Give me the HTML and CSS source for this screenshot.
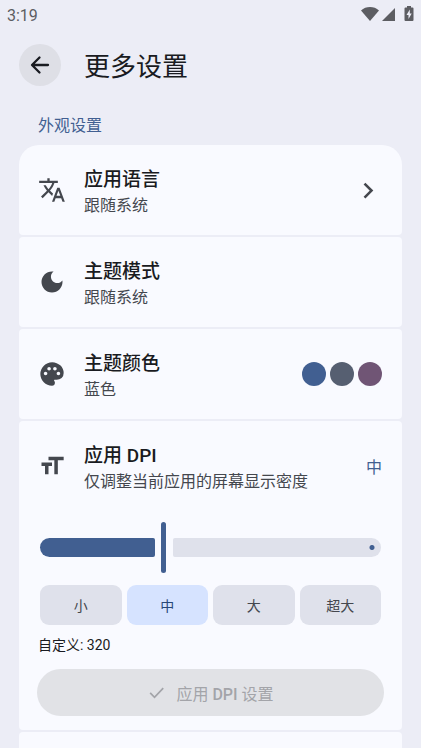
FILE: index.html
```html
<!DOCTYPE html>
<html lang="zh-CN">
<head>
  <meta charset="utf-8">
  <meta name="viewport" content="width=device-width, initial-scale=1">
  <title>更多设置</title>
  <link rel="stylesheet" href="styles.css">
</head>
<body>
  <div class="status-bar">
    <span class="clock">3:19</span>
    <svg class="status-icons" viewBox="0 0 54 18" aria-hidden="true">
      <path d="M1 4.500C6 -.1 14 -.1 19 4.500L10 15z"/>
      <path d="M35 2v13H22z"/>
      <path fill-rule="evenodd" d="M47 0h4v1.500h1.500q1 0 1 1V14q0 1-1 1h-7q-1 0-1-1V2.500q0-1 1-1H47zM49.800 3.500L46.500 9h2v4l3.200-5.500h-1.900z"/>
    </svg>
  </div>

  <header class="top-bar">
    <button class="back" type="button" aria-label="返回">
      <svg viewBox="0 0 24 24" aria-hidden="true"><path d="M20 12H4.500M11.500 4.500L4 12l7.500 7.500"/></svg>
    </button>
    <h1>更多设置</h1>
  </header>

  <main class="content">
    <h2 class="section-title">外观设置</h2>

    <button class="card row" type="button">
      <svg class="icon" viewBox="0 0 24 24" aria-hidden="true"><path d="M12.870 15.070l-2.540-2.510.03-.03c1.740-1.940 2.980-4.170 3.710-6.530H17V4h-7V2H8v2H1v1.990h11.170C11.500 7.920 10.440 9.750 9 11.350 8.070 10.320 7.300 9.190 6.690 8h-2c.73 1.630 1.730 3.170 2.980 4.560l-5.090 5.020L4 19l5-5 3.110 3.110.76-2.040zM18.500 10h-2L12 22h2l1.120-3h4.750L21 22h2l-4.500-12zm-2.620 7l1.620-4.330L19.120 17h-3.240z"/></svg>
      <span class="label"><span class="name">应用语言</span><span class="detail">跟随系统</span></span>
      <svg class="chevron" viewBox="0 0 24 24" aria-hidden="true"><path d="M9 6.500l6 6-6 6"/></svg>
    </button>

    <button class="card row" type="button">
      <svg class="icon" viewBox="0 0 24 24" aria-hidden="true"><path d="M12 3c-4.970 0-9 4.030-9 9s4.030 9 9 9 9-4.030 9-9c0-.46-.04-.92-.1-1.360-.98 1.370-2.580 2.260-4.400 2.260-2.980 0-5.400-2.420-5.400-5.400 0-1.810.89-3.420 2.260-4.400-.44-.06-.9-.1-1.360-.1z"/></svg>
      <span class="label"><span class="name">主题模式</span><span class="detail">跟随系统</span></span>
    </button>

    <button class="card row" type="button">
      <svg class="icon" viewBox="0 -960 960 960" aria-hidden="true"><path d="M480-80q-82 0-155-31.500t-127.500-86Q143-252 111.500-325T80-480q0-83 32.500-156t88-127Q256-817 330-848.500T488-880q80 0 151 27.500t124.500 76q53.500 48.500 85 115T880-518q0 115-70 176.500T640-280h-74q-9 0-12.500 5t-3.500 11q0 12 15 34.500t15 51.500q0 50-27.500 74T480-80ZM260-440q26 0 43-17t17-43q0-26-17-43t-43-17q-26 0-43 17t-17 43q0 26 17 43t43 17Zm120-160q26 0 43-17t17-43q0-26-17-43t-43-17q-26 0-43 17t-17 43q0 26 17 43t43 17Zm200 0q26 0 43-17t17-43q0-26-17-43t-43-17q-26 0-43 17t-17 43q0 26 17 43t43 17Zm120 160q26 0 43-17t17-43q0-26-17-43t-43-17q-26 0-43 17t-17 43q0 26 17 43t43 17Z"/></svg>
      <span class="label"><span class="name">主题颜色</span><span class="detail">蓝色</span></span>
      <span class="swatches">
        <span class="swatch primary"></span>
        <span class="swatch secondary"></span>
        <span class="swatch tertiary"></span>
      </span>
    </button>

    <section class="card dpi">
      <div class="row">
        <svg class="icon" viewBox="0 0 24 24" aria-hidden="true"><path d="M9 4v3h5v12h3V7h5V4H9zm-6 8h3v7h3v-7h3V9H3v3z"/></svg>
        <label class="label" for="dpi"><span class="name">应用 DPI</span><span class="detail">仅调整当前应用的屏幕显示密度</span></label>
        <output class="value" for="dpi">中</output>
      </div>
      <div class="slider" style="--position: 36%">
        <span class="track-active"></span>
        <span class="track-rest"></span>
        <input id="dpi" type="range" min="140" max="640" value="320">
      </div>
      <div class="presets">
        <button type="button">小</button>
        <button type="button" class="selected" aria-pressed="true">中</button>
        <button type="button">大</button>
        <button type="button">超大</button>
      </div>
      <p class="custom">自定义: 320</p>
      <button class="apply" type="button" disabled>
        <svg viewBox="0 0 24 24" aria-hidden="true"><path d="M4 12.500l5.500 5.500L20.500 6.500"/></svg>
        <span>应用 <b>DPI</b> 设置</span>
      </button>
    </section>

    <section class="card next"></section>
  </main>
</body>
</html>
```

FILE: styles.css
```css
:root {
  --page: #ecedf6;
  --surface: #f9faff;
  --ink: #191b21;
  --ink-soft: #44474e;
  --primary: #415f91;
  --container: #dfe1eb;
}

* {
  box-sizing: border-box;
}

body {
  margin: 0;
  min-height: 100vh;
  display: flex;
  flex-direction: column;
  background: var(--page);
  color: var(--ink);
  font-family: Roboto, "Noto Sans CJK SC", sans-serif;
  font-size: 16px;
}

button {
  border: 0;
  padding: 0;
  font: inherit;
  color: inherit;
}

h1, h2, p {
  margin: 0;
  font-weight: 400;
}

.status-bar {
  display: flex;
  align-items: center;
  justify-content: space-between;
  height: 30px;
  padding: 0 7px;
  color: #5c5d62;
}

.status-icons {
  width: 54px;
  height: 18px;
  fill: #5c5d62;
}

.top-bar {
  display: flex;
  align-items: center;
  gap: 23px;
  padding: 14px 19px;
}

.back {
  display: grid;
  place-items: center;
  width: 42px;
  height: 42px;
  border-radius: 50%;
  background: #dedfe6;
}

.back svg {
  width: 24px;
  height: 24px;
  fill: none;
  stroke: var(--ink);
  stroke-width: 2.300;
  stroke-linecap: round;
  stroke-linejoin: round;
}

h1 {
  padding-top: 4px;
  font-size: 26px;
  line-height: 38px;
}

.content {
  flex: 1;
  display: flex;
  flex-direction: column;
  gap: 2px;
  padding: 0 19px;
}

.section-title {
  padding: 14px 19px 5px;
  font-size: 16px;
  line-height: 24px;
  color: var(--primary);
}

.card {
  border-radius: 4px;
  background: var(--surface);
}

.section-title + .card {
  border-radius: 20px 20px 4px 4px;
}

.row {
  display: flex;
  align-items: center;
  gap: 18px;
  width: 100%;
  height: 90px;
  padding: 0 20px 0 19px;
  text-align: left;
}

.icon {
  flex: none;
  width: 28px;
  height: 28px;
  fill: var(--ink-soft);
}

.label {
  flex: 1;
  display: flex;
  flex-direction: column;
  padding-top: 6px;
  line-height: 26px;
}

.name {
  font-size: 19px;
  font-weight: 500;
}

.detail {
  color: var(--ink-soft);
}

.chevron {
  width: 28px;
  height: 28px;
  fill: none;
  stroke: var(--ink-soft);
  stroke-width: 2.200;
}

.swatches {
  display: flex;
  gap: 4px;
}

.swatch {
  width: 24px;
  height: 24px;
  border-radius: 50%;
}

.primary {
  background: var(--primary);
}

.secondary {
  background: #565f71;
}

.tertiary {
  background: #705575;
}

.value {
  color: var(--primary);
}

.dpi {
  padding-bottom: 14px;
}

.slider {
  position: relative;
  display: flex;
  align-items: center;
  gap: 18px;
  height: 51px;
  margin: 11px 21px 12px;
}

.track-active,
.track-rest {
  height: 19px;
}

.track-active {
  width: calc(var(--position) - 8px);
  border-radius: 10px 2px 2px 10px;
  background: var(--primary);
}

.track-rest {
  flex: 1;
  border-radius: 2px 10px 10px 2px;
  background: radial-gradient(circle at calc(100% - 9px) 50%, var(--primary) 2px, transparent 3px) var(--container);
}

.slider input {
  position: absolute;
  inset: 0;
  width: 100%;
  height: 100%;
  margin: 0;
  appearance: none;
  background: transparent;
}

.slider input::-webkit-slider-thumb {
  appearance: none;
  width: 5px;
  height: 51px;
  border-radius: 3px;
  background: var(--primary);
}

.presets {
  display: grid;
  grid-template-columns: repeat(4, 1fr);
  gap: 5px;
  margin: 0 21px;
}

.presets button {
  height: 40px;
  border-radius: 9px;
  background: var(--container);
  color: var(--ink-soft);
  font-size: 14px;
}

.presets .selected {
  background: #d6e3ff;
  color: #284777;
}

.custom {
  margin: 10px 19px 14px;
  font-size: 14px;
  line-height: 20px;
}

.apply {
  display: flex;
  align-items: center;
  justify-content: center;
  gap: 10px;
  width: calc(100% - 36px);
  height: 47px;
  margin: 0 18px;
  border-radius: 24px;
  background: #e1e2e6;
  color: #a3a4a9;
}

.apply b {
  font-weight: 500;
}

.apply svg {
  width: 19px;
  height: 19px;
  fill: none;
  stroke: currentColor;
  stroke-width: 2.200;
}

.next {
  flex: 1;
  min-height: 16px;
  border-radius: 4px 4px 0 0;
}
```
